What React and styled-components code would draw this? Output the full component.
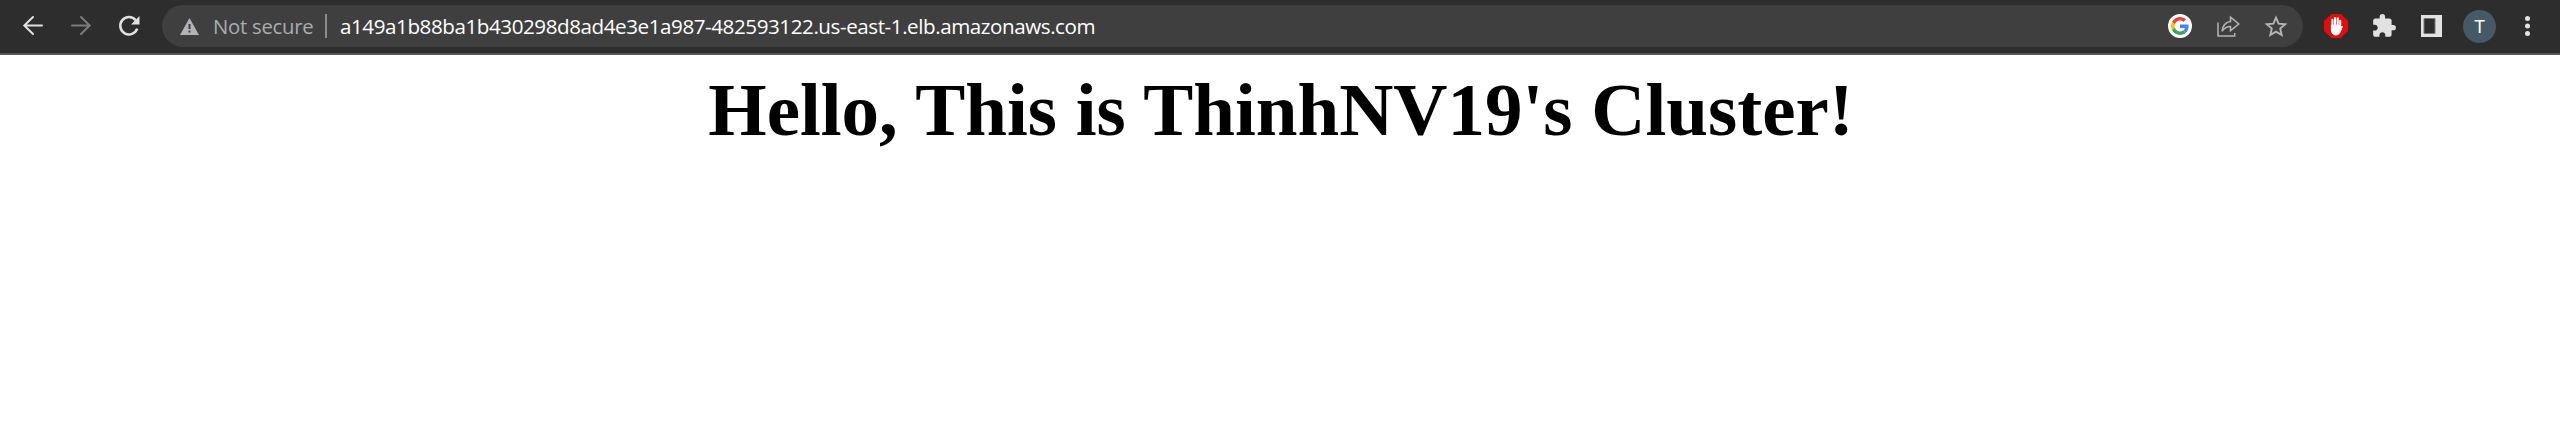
import React from "react";
import styled, { createGlobalStyle } from "styled-components";
import { MdExtension } from "react-icons/md";

const GlobalStyle = createGlobalStyle`
  body { margin: 0; background: #fff; }
`;

const Page = styled.div`
  display: flex;
  flex-direction: column;
  height: 446px;
  background: #fff;
  overflow: hidden;
`;

const Toolbar = styled.header`
  display: flex;
  align-items: flex-start;
  box-sizing: border-box;
  height: 55px;
  padding: 5px 17px 0 18px;
  background: #2d2d2d;
  border-bottom: 2px solid #565454;
  font-family: "Open Sans", "Noto Sans", sans-serif;
`;

const NavButtons = styled.nav`
  display: flex;
  gap: 18px;
  width: 144px;
  padding-top: 5px;
`;

const IconButton = styled.button`
  display: flex;
  flex: none;
  padding: 0;
  border: 0;
  background: none;
  color: ${(p) => (p.$muted ? "#7b7b7b" : "#e2e2e2")};
`;

const ExtensionsButton = styled(IconButton)`
  justify-content: center;
  width: 30px;
`;

const AddressBar = styled.div`
  display: flex;
  align-items: center;
  box-sizing: border-box;
  flex: 1;
  height: 42px;
  padding: 0 12px 0 16px;
  border-radius: 21px;
  background: #3f3f3f;
`;

const Status = styled.span`
  width: 112px;
  margin-left: 14px;
  color: #a9adb1;
  font-size: 20.3px;
  line-height: 42px;
  letter-spacing: -0.25px;
  white-space: nowrap;
`;

const Divider = styled.span`
  width: 2px;
  height: 24px;
  margin-right: 13px;
  background: #8b8b8b;
`;

const Url = styled.span`
  flex: 1;
  color: #fff;
  font-size: 20.6px;
  line-height: 42px;
  letter-spacing: -0.43px;
  white-space: nowrap;
`;

const BarActions = styled.div`
  display: flex;
  gap: 18px;
  color: #b4b4b4;
`;

const Extensions = styled.div`
  display: flex;
  align-items: center;
  gap: 18px;
  height: 42px;
  margin-left: 18px;
`;

const Avatar = styled.span`
  width: 33px;
  height: 33px;
  margin: 1px -1px 0 -2px;
  border-radius: 50%;
  background: #455a66;
  color: #fff;
  font: 18px/33px Roboto, sans-serif;
  text-align: center;
`;

const Heading = styled.h1`
  margin: 15px 0 0;
  padding-left: 2px;
  color: #000;
  font: bold 75px/80px "Liberation Serif", serif;
  text-align: center;
  white-space: nowrap;
`;

const Svg = (props) => (
  <svg width="30" height="30" viewBox="0 0 30 30" fill="none" stroke="currentColor" strokeWidth="2" {...props} />
);

const Back = () => (
  <Svg strokeLinecap="round">
    <path d="M24 15.5H6.3M15 7L6.3 15.5L15 24" />
  </Svg>
);

const Forward = () => (
  <Svg strokeLinecap="round">
    <path d="M6 15.5h17.7M15 7l8.7 8.5L15 24" />
  </Svg>
);

const Reload = () => (
  <Svg strokeWidth="2.5">
    <path d="M23.2 18.6A8.7 8.7 0 1 1 21.7 10.2" />
    <path d="M25.5 6v8.5H17z" fill="currentColor" stroke="none" />
  </Svg>
);

const Warning = () => (
  <svg width="21" height="24" viewBox="0 0 21 24">
    <path d="M11.5 4L21 21H2z" fill="#b0b4b8" />
    <path d="M10.5 10h2v5h-2zM10.5 16.5h2v2h-2z" fill="#3f3f3f" />
  </svg>
);

const Google = () => (
  <Svg stroke="none">
    <circle cx="15" cy="15" r="12" fill="#fff" />
    <g transform="translate(6 6) scale(.375)">
      <path fill="#EA4335" d="M24 9.5c3.54 0 6.71 1.22 9.21 3.6l6.85-6.85C35.9 2.38 30.47 0 24 0 14.62 0 6.51 5.38 2.56 13.22l7.98 6.19C12.43 13.72 17.74 9.5 24 9.5z" />
      <path fill="#4285F4" d="M46.98 24.55c0-1.57-.15-3.09-.38-4.55H24v9.02h12.94c-.58 2.96-2.26 5.48-4.78 7.18l7.73 6c4.51-4.18 7.09-10.36 7.09-17.65z" />
      <path fill="#FBBC05" d="M10.53 28.59c-.48-1.45-.76-2.99-.76-4.59s.27-3.14.76-4.59l-7.98-6.19C.92 16.46 0 20.12 0 24c0 3.88.92 7.54 2.56 10.78l7.97-6.19z" />
      <path fill="#34A853" d="M24 48c6.48 0 11.93-2.13 15.89-5.81l-7.73-6c-2.15 1.45-4.92 2.3-8.16 2.3-6.26 0-11.57-4.22-13.47-9.91l-7.98 6.19C6.51 42.62 14.62 48 24 48z" />
    </g>
  </Svg>
);

const Share = () => (
  <Svg strokeWidth="1.5">
    <path d="M5 11.5V25H21.7V22" />
    <path d="M9 20.2C10 13.4 13 11 17.5 10.5V6.2L25.8 13L17.5 19.6V15.6C13.8 15.6 11.4 17 9 20.2z" />
  </Svg>
);

const Star = () => (
  <Svg strokeWidth="1.9">
    <path d="M15 6.6L17.6 12.7L24.2 13.3L19.2 17.6L20.7 24L15 20.6L9.3 24L10.8 17.6L5.8 13.3L12.4 12.7z" />
  </Svg>
);

const Blocker = () => (
  <Svg stroke="none">
    <path d="M10.5 3h9.5l7 7v10l-7 7h-9.5L3 20V10z" fill="#e40d0d" />
    <g stroke="#fff" strokeWidth="2.1" strokeLinecap="round">
      <path d="M11.4 16V8.7M14 15V7M16.7 15V7.4M19.2 16V9.7" />
      <path d="M10.4 14.4V19c0 6.3 7.5 6.5 9 1.6l2-5.1c-1.1-.5-2.2 1.4-2.6 2.1V14.4z" fill="#fff" strokeWidth="1" />
    </g>
  </Svg>
);

const SidePanel = () => (
  <Svg>
    <path d="M4 4h21v22H4z" fill="#e2e2e2" stroke="none" />
    <path d="M7 7.5h11v15H7z" fill="#2d2d2d" stroke="#777" strokeWidth="1" />
  </Svg>
);

const Menu = () => (
  <Svg fill="currentColor" stroke="none">
    <circle cx="14.5" cy="7.5" r="2.5" />
    <circle cx="14.5" cy="15" r="2.5" />
    <circle cx="14.5" cy="22.5" r="2.5" />
  </Svg>
);

export default function App() {
  return (
    <Page>
      <GlobalStyle />
      <Toolbar>
        <NavButtons>
          <IconButton aria-label="Back"><Back /></IconButton>
          <IconButton aria-label="Forward" $muted><Forward /></IconButton>
          <IconButton aria-label="Reload"><Reload /></IconButton>
        </NavButtons>
        <AddressBar>
          <Warning />
          <Status>Not secure</Status>
          <Divider />
          <Url>a149a1b88ba1b430298d8ad4e3e1a987-482593122.us-east-1.elb.amazonaws.com</Url>
          <BarActions>
            <Google />
            <Share />
            <Star />
          </BarActions>
        </AddressBar>
        <Extensions>
          <Blocker />
          <ExtensionsButton aria-label="Extensions"><MdExtension size={26} /></ExtensionsButton>
          <IconButton aria-label="Side panel"><SidePanel /></IconButton>
          <Avatar>T</Avatar>
          <IconButton aria-label="Menu"><Menu /></IconButton>
        </Extensions>
      </Toolbar>
      <Heading>Hello, This is ThinhNV19's Cluster!</Heading>
    </Page>
  );
}
